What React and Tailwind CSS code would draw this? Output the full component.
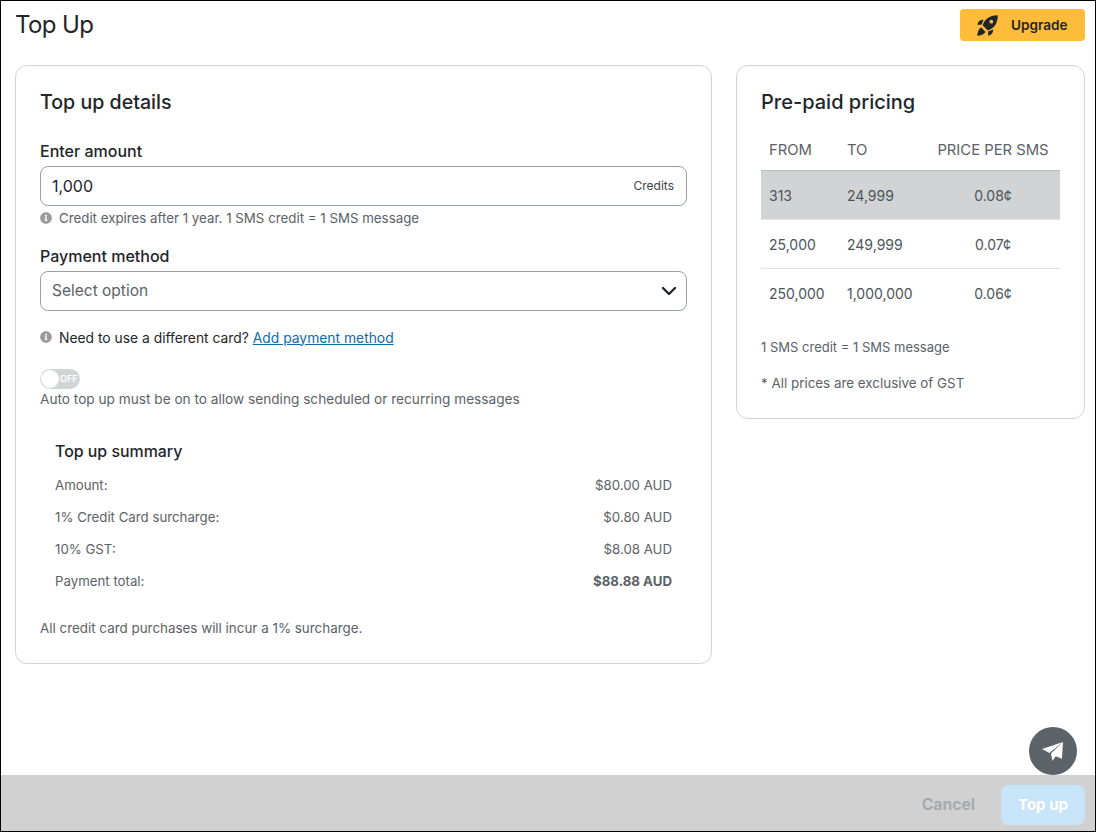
import React from 'react';
import { ChevronDown } from 'lucide-react';
import { FaInfoCircle } from 'react-icons/fa';

const pricing = [
  { from: '313', to: '24,999', price: '0.08¢', active: true },
  { from: '25,000', to: '249,999', price: '0.07¢' },
  { from: '250,000', to: '1,000,000', price: '0.06¢' }
];

const summary = [
  { label: 'Amount:', value: '$80.00 AUD' },
  { label: '1% Credit Card surcharge:', value: '$0.80 AUD' },
  { label: '10% GST:', value: '$8.08 AUD' },
  { label: 'Payment total:', value: '$88.88 AUD', bold: true }
];

function RocketIcon() {
  return (
    <svg viewBox="0 0 21 21" className="h-[21px] w-[21px] shrink-0" fill="currentColor">
      <path
        fillRule="evenodd"
        d="M20.800 .2C13 .2 8 3.500 5.600 10.200l5.200 5.200C17.500 13 20.800 8 20.800 .2ZM14.300 4.800a1.900 1.900 0 1 1 0 3.800 1.900 1.900 0 0 1 0-3.800Z"
      />
      <path d="M6.500 4.800C3.500 4.800 1.300 6 .3 9.800h4.200Z" />
      <path d="M16.200 14.500c0 3-1.200 5.200-5 6.200v-4.200Z" />
      <path d="M4.300 12.600 8.400 16.700c-1 2.600-5.400 4.100-8.100 4.100 0-2.700 1.400-7.100 4-8.200Z" />
    </svg>
  );
}

function PlaneIcon() {
  return (
    <svg viewBox="0 0 20 18" className="-ml-[2px] h-[19px] w-[21px]" fill="white">
      <path d="M0 6.500 20 0 7 10.500Z" />
      <path d="M20 0 19 16l-6-2.500L10 18 8.500 11Z" />
    </svg>
  );
}

export default function App() {
  return (
    <div
      className="relative flex h-[832px] w-[1096px] flex-col overflow-hidden border border-black bg-white text-[#1f2529]"
      style={{ fontFamily: '"Inter", "Noto Sans", sans-serif' }}
    >
      {/* Header */}
      <div className="flex h-[64px] shrink-0 items-start justify-between pl-[14px] pr-[10px]">
        <h1 className="mt-[8px] text-[24px] leading-[32px] tracking-[-0.6px]">Top Up</h1>
        <button className="mt-[8px] flex h-[32px] w-[125px] items-center gap-[13px] rounded-[4px] bg-[#ffbc3a] pl-[17px] text-[13.6px] font-semibold">
          <RocketIcon />
          Upgrade
        </button>
      </div>

      {/* Content */}
      <div className="flex flex-1 items-start gap-[24px] pl-[14px] pr-[10px]">
        <div className="h-[599px] w-[697px] rounded-[12px] border border-[#d4d4d4] px-[24px] pt-[23px]">
          <h2 className="text-[19.6px] leading-[26px] font-medium">Top up details</h2>

          <label className="mt-[26px] block text-[16px] leading-[20px] font-medium">Enter amount</label>
          <div className="mt-[5px] flex h-[40px] items-center justify-between rounded-[8px] border border-[#9aa1a6] pl-[11px] pr-[12px]">
            <span className="text-[16px]">1,000</span>
            <span className="text-[12px] text-[#3d4448]">Credits</span>
          </div>
          <div className="mt-[5px] flex h-[16px] items-center gap-[7px] text-[13.3px] text-[#5b6267]">
            <FaInfoCircle className="-mt-[2px] h-[12px] w-[12px] text-[#9a9a9a]" />
            Credit expires after 1 year. 1 SMS credit = 1 SMS message
          </div>

          <label className="mt-[19px] block text-[16px] leading-[20px] font-medium">Payment method</label>
          <div className="mt-[5px] flex h-[40px] items-center justify-between rounded-[8px] border border-[#9aa1a6] pl-[11px] pr-[5px]">
            <span className="text-[15.500px] text-[#5b6267]">Select option</span>
            <ChevronDown className="h-[24px] w-[24px] text-[#1f2529]" strokeWidth={2.4} />
          </div>
          <div className="mt-[19px] flex h-[16px] items-center gap-[7px] text-[13.850px]">
            <FaInfoCircle className="-mt-[2px] h-[12px] w-[12px] text-[#9a9a9a]" />
            <span>
              Need to use a different card?{' '}
              <a className="text-[#0b6bb3] underline">Add payment method</a>
            </span>
          </div>

          <div className="mt-[23px] flex h-[20px] w-[40px] items-center rounded-full bg-[#d2d4d6] pl-[1px]">
            <span className="h-[18px] w-[18px] rounded-full bg-white" />
            <span className="ml-[1px] text-[9px] font-semibold text-white">OFF</span>
          </div>
          <p className="mt-[1px] text-[13.650px] leading-[18px] text-[#5b6267]">
            Auto top up must be on to allow sending scheduled or recurring messages
          </p>

          <div className="mt-[33px] px-[15px]">
            <h3 className="text-[15.900px] leading-[22px] font-medium">Top up summary</h3>
            <div className="mt-[7px]">
              {summary.map((row) => (
                <div key={row.label} className="flex h-[32px] items-center justify-between text-[13.250px] text-[#5b6267]">
                  <span>{row.label}</span>
                  <span className={row.bold ? 'font-bold' : ''}>{row.value}</span>
                </div>
              ))}
            </div>
          </div>
          <p className="mt-[21px] text-[13.400px] leading-[18px] text-[#5b6267]">
            All credit card purchases will incur a 1% surcharge.
          </p>
        </div>

        <div className="h-[354px] w-[349px] rounded-[12px] border border-[#d4d4d4] px-[24px] pt-[23px]">
          <h2 className="text-[20px] leading-[26px] font-medium">Pre-paid pricing</h2>
          <table className="mt-[11px] w-[299px] table-fixed border-collapse">
            <thead>
              <tr className="h-[44px] border-b border-[#b9bdc0] text-[14.800px] text-[#5b6267]">
                <th className="w-[78px] pl-[8px] pt-[5px] text-left font-normal">FROM</th>
                <th className="w-[90px] pl-[8px] pt-[5px] text-left font-normal">TO</th>
                <th className="pt-[5px] pr-[3px] text-center font-normal">PRICE PER SMS</th>
              </tr>
            </thead>
            <tbody>
              {pricing.map((row) => (
                <tr
                  key={row.from}
                  className={`h-[49px] border-b text-[14px] text-[#4d5459] last:border-b-0 ${
                    row.active ? 'border-[#e2e3e4] bg-[#d1d3d4]' : 'border-[#e2e3e4]'
                  }`}
                >
                  <td className="pl-[8px] pt-[1px]">{row.from}</td>
                  <td className="pl-[8px] pt-[1px]">{row.to}</td>
                  <td className="pt-[1px] pr-[3px] text-center">{row.price}</td>
                </tr>
              ))}
            </tbody>
          </table>
          <p className="mt-[21px] text-[13px] leading-[18px] text-[#5b6267]">1 SMS credit = 1 SMS message</p>
          <p className="mt-[18px] text-[13.400px] leading-[18px] text-[#5b6267]">* All prices are exclusive of GST</p>
        </div>
      </div>

      {/* Footer */}
      <div className="flex h-[56px] shrink-0 items-center justify-end gap-[26px] bg-[#d1d1d1] pr-[10px] pt-[4px]">
        <span className="text-[15.700px] font-bold text-[#a3abb1]">Cancel</span>
        <button className="h-[40px] w-[84px] rounded-[8px] bg-[#c8e4f8] text-[15px] font-bold text-white">Top up</button>
      </div>

      {/* Floating send button */}
      <div className="absolute left-[1028px] top-[726px] flex h-[48px] w-[48px] items-center justify-center rounded-full bg-[#5b6268]">
        <PlaneIcon />
      </div>
    </div>
  );
}
